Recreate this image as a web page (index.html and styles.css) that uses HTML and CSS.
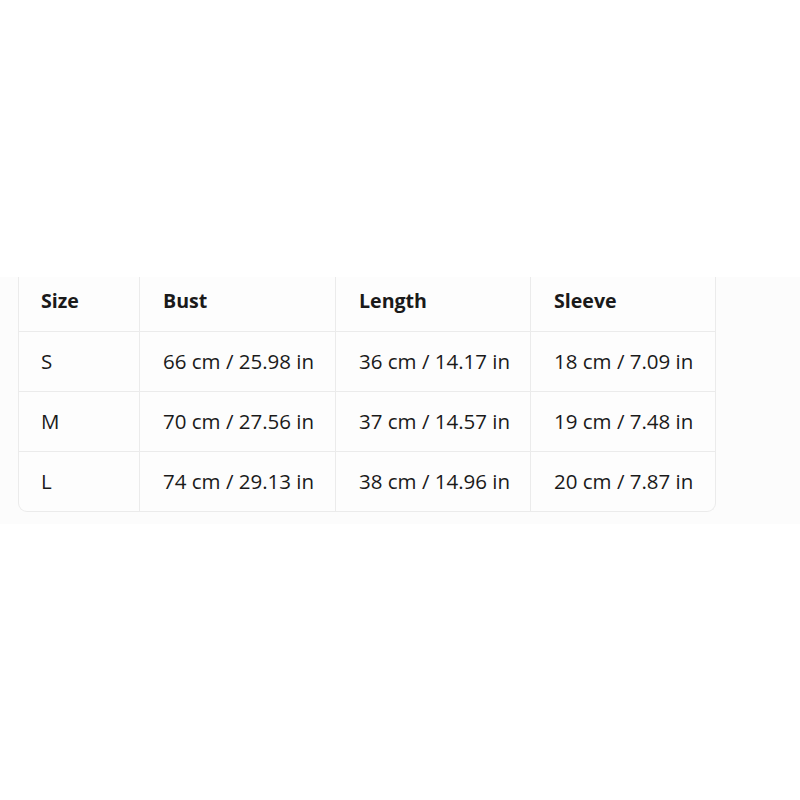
FILE: index.html
```html
<!DOCTYPE html>
<html>
<head>
<meta charset="utf-8">
<link rel="stylesheet" href="styles.css">
</head>
<body>
<div class="top"></div>
<div class="band">
  <table class="sizes">
    <thead>
      <tr><th class="c1">Size</th><th class="c2">Bust</th><th class="c3">Length</th><th class="c4">Sleeve</th></tr>
    </thead>
    <tbody>
      <tr><td>S</td><td>66 cm / 25.98 in</td><td>36 cm / 14.17 in</td><td>18 cm / 7.09 in</td></tr>
      <tr><td>M</td><td>70 cm / 27.56 in</td><td>37 cm / 14.57 in</td><td>19 cm / 7.48 in</td></tr>
      <tr class="last"><td>L</td><td>74 cm / 29.13 in</td><td>38 cm / 14.96 in</td><td>20 cm / 7.87 in</td></tr>
    </tbody>
  </table>
</div>
</body>
</html>
```

FILE: styles.css
```css
html, body {
  margin: 0;
  padding: 0;
  background: #ffffff;
}
body {
  font-family: "Open Sans", "Noto Sans", sans-serif;
  color: #1a1a1a;
}
.top {
  height: 277px;
}
.band {
  background: #fcfcfc;
  padding: 0 0 12px 18px;
}
.sizes {
  width: 698px;
  border-collapse: separate;
  border-spacing: 0;
  border-left: 1px solid #ebebeb;
  border-right: 1px solid #ebebeb;
  border-bottom: 1px solid #ebebeb;
  border-radius: 0 0 9px 9px;
  background: #fdfdfd;
  font-size: 20.5px;
}
.sizes th, .sizes td {
  text-align: left;
  padding: 0 0 2px 22px;
  border-left: 1px solid #ebebeb;
  height: 59px;
  box-sizing: border-box;
}
.sizes th:first-child, .sizes td:first-child {
  border-left: none;
}
.sizes th {
  font-weight: 700;
  font-size: 19.6px;
  height: 55px;
  padding-bottom: 8px;
  border-bottom: 1px solid #ebebeb;
}
.sizes td {
  font-weight: 400;
  height: 60px;
}
.sizes tr.last td {
  height: 59px;
}
.sizes tbody tr:not(:last-child) td {
  border-bottom: 1px solid #ebebeb;
}
.c1 { width: 120px; }
.c2 { width: 196px; }
.c3 { width: 195px; }
.c4 { width: 185px; }
.sizes th.c2, .sizes th.c3, .sizes th.c4 { padding-left: 23px; }
.sizes td:not(:first-child) { padding-left: 23px; }
```
